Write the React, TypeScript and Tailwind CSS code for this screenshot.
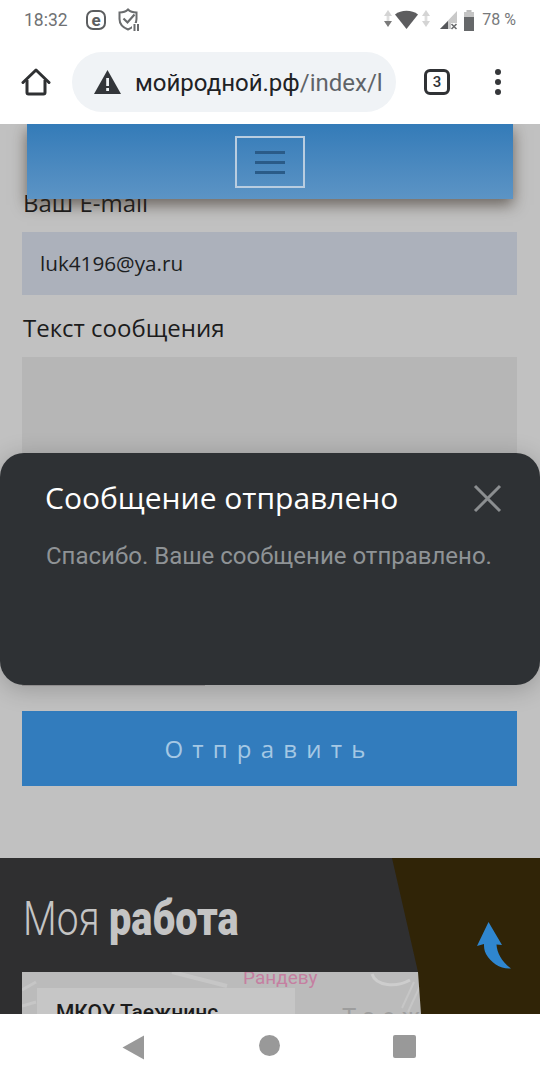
const roboto = "font-['Roboto',sans-serif]"
const openSans = "font-['Open_Sans',sans-serif]"

function StatusBar() {
  return (
    <div className={`relative flex h-10 items-center pl-6 pr-6 text-[16px] text-[#6f7173] ${roboto}`}>
      <span className="w-[62px] text-[17.5px]">18:32</span>
      {/* e badge */}
      <span className="flex h-[20px] w-[20px] items-center justify-center rounded-[7px] border-[2.5px] border-[#5c5e60] text-[17px] leading-none font-bold text-[#5c5e60]">e</span>
      {/* shield */}
      <svg className="ml-[12px]" width="22" height="24" viewBox="0 0 22 24" fill="none">
        <path d="M1.5 4.5C5 4.5 8 3.5 10 1.5 12 3.5 15 4.5 18.5 4.5V11C18.5 16 15 19.5 10 21.5 5 19.5 1.5 16 1.5 11Z" stroke="#6a6c6e" strokeWidth="2" />
        <path d="M5.5 10.5l4 4 7-8" stroke="#6a6c6e" strokeWidth="2.2" />
        <rect x="14" y="15" width="8" height="8" fill="white" />
        <rect x="15.5" y="16" width="2" height="7" fill="#6a6c6e" />
        <rect x="19" y="16" width="2" height="7" fill="#6a6c6e" />
      </svg>
      <div className="flex-1" />
      {/* wifi with activity arrows */}
      <svg width="47" height="22" viewBox="0 0 47 22">
        <path d="M4 1L8 7H0Z" fill="#d4d4d4" />
        <path d="M0 12h8L4 18Z" fill="#7a7a7a" />
        <rect x="2.6" y="7" width="2.8" height="5" fill="#dedede" />
        <path d="M11 5.5C17 .5 28 .5 34 5.5L22.5 20Z" fill="#5d5d5f" />
        <path d="M42 1L46 7H38Z" fill="#d4d4d4" />
        <path d="M38 12h8L42 18Z" fill="#d4d4d4" />
        <rect x="40.6" y="7" width="2.8" height="5" fill="#dedede" />
      </svg>
      {/* signal */}
      <svg className="ml-[9px]" width="19" height="20" viewBox="0 0 19 20">
        <path d="M0 19L17 1V13H11V19Z" fill="#c9c9c9" />
        <path d="M0 19L8 11V19Z" fill="#55575a" />
        <path d="M11.5 14l5 5M16.5 14l-5 5" stroke="#6a6c6e" strokeWidth="1.6" />
      </svg>
      {/* battery */}
      <svg className="ml-[4px]" width="12" height="21" viewBox="0 0 12 21">
        <rect x="3.5" y="0" width="5" height="3" fill="#bdbdbd" />
        <rect x="1" y="2" width="10" height="5" fill="#c4c4c4" />
        <rect x="1" y="7" width="10" height="14" fill="#66686a" />
      </svg>
      <span className="ml-[7px] text-[16px] text-[#77797b]">78 %</span>
    </div>
  )
}

function Toolbar() {
  return (
    <div className="flex h-[84px] items-start pt-3">
      <div className="flex h-[60px] w-[72px] items-center justify-center">
        <svg className="ml-[-1px]" width="30" height="28" viewBox="0 0 30 28" fill="none">
          <path d="M2 14.5L15 2l13 12.5" stroke="#2f3133" strokeWidth="3" strokeLinecap="round" strokeLinejoin="round" />
          <path d="M6 12v12.5a1.5 1.5 0 0 0 1.5 1.5h15a1.5 1.5 0 0 0 1.5-1.5V12" stroke="#2f3133" strokeWidth="3" />
        </svg>
      </div>
      <div className={`flex h-[60px] w-[324px] items-center overflow-hidden rounded-full bg-[#f0f3f6] pl-[22px] text-[24px] ${roboto}`}>
        <svg className="shrink-0" width="27" height="24" viewBox="0 0 27 24">
          <path d="M13.5 0L27 24H0Z" fill="#33363a" />
          <rect x="12.2" y="8" width="2.8" height="8" fill="#f0f3f6" />
          <rect x="12.2" y="18" width="2.8" height="3" fill="#f0f3f6" />
        </svg>
        <span className="ml-[14px] w-[247px] shrink-0 overflow-hidden pt-[2px] whitespace-nowrap text-[#202225]">
          мойродной.рф<span className="text-[#5f6368]">/index/l</span>
        </span>
      </div>
      <div className="ml-[28px] flex h-[60px] w-[26px] items-center justify-center">
        <span className={`flex h-[26px] w-[26px] items-center justify-center rounded-[6px] border-[3px] border-[#303235] text-[15px] font-medium text-[#303235] ${roboto}`}>3</span>
      </div>
      <div className="ml-[44px] flex h-[60px] w-[8px] flex-col items-center justify-center gap-[4px]">
        <span className="h-[6px] w-[6px] rounded-full bg-[#35373a]" />
        <span className="h-[6px] w-[6px] rounded-full bg-[#35373a]" />
        <span className="h-[6px] w-[6px] rounded-full bg-[#35373a]" />
      </div>
    </div>
  )
}

function FloatingNav() {
  return (
    <div className="absolute top-0 left-[27px] z-10 flex h-[75px] w-[486px] justify-center bg-gradient-to-b from-[#337bb8] to-[#5c94c5] pt-3 shadow-[0_6px_14px_rgba(50,40,30,0.6)]">
      <div className="flex h-[52px] w-[70px] flex-col items-center justify-center gap-[7px] border-2 border-[#b9cde0]">
        <span className="h-[3px] w-[30px] bg-[#2a5b88]" />
        <span className="h-[3px] w-[30px] bg-[#2a5b88]" />
        <span className="h-[3px] w-[30px] bg-[#2a5b88]" />
      </div>
    </div>
  )
}

function Modal() {
  return (
    <div className="absolute top-[329px] left-0 z-20 h-[232px] w-[540px] rounded-[24px] bg-[#2e3134] pt-[28px] pl-[45px] shadow-[0_4px_24px_rgba(0,0,0,0.22)]">
      <div className="flex items-center">
        <h2 className={`text-[30px] leading-[34px] text-white ${openSans}`}>Сообщение отправлено</h2>
        <svg className="ml-[75px]" width="29" height="29" viewBox="0 0 29 29">
          <path d="M2 2l25 25M27 2L2 27" stroke="#8b8e90" strokeWidth="3" />
        </svg>
      </div>
      <p className={`mt-[27px] ml-[1px] text-[24px] leading-[28px] whitespace-nowrap text-[#8f9396] ${roboto}`}>
        Спасибо. Ваше сообщение отправлено.
      </p>
    </div>
  )
}

function MapPreview() {
  return (
    <div className="relative mt-[28px] h-[60px] w-[495px] overflow-hidden bg-[#bbbbbb]">
      <svg className="absolute inset-0" width="495" height="60" viewBox="0 0 495 60" fill="none">
        <path d="M150 0l55 14" stroke="#c6c6c6" strokeWidth="4" />
        <path d="M0 18L14 10" stroke="#c6c6c6" strokeWidth="3" />
        <path d="M0 34L14 30" stroke="#c6c6c6" strokeWidth="3" />
        <path d="M350 2c4 12 24 14 38 6" stroke="#cdcdcd" strokeWidth="3" />
        <path d="M392 10l-12 26M398 14l-12 26" stroke="#c6c6c6" strokeWidth="2" />
      </svg>
      <span className={`absolute top-[-8px] left-[221px] text-[19px] text-[#c57fa1] ${roboto}`}>Рандеву</span>
      <span className={`absolute top-[27px] left-[320px] text-[24px] tracking-[7px] text-[#9d9d9d] ${roboto}`}>Таеж</span>
      <div className="absolute top-[16px] left-[15px] h-[44px] w-[258px] bg-[#c6c6c6] pt-[12px] pl-[19px]">
        <span className={`block text-[21px] leading-[24px] font-medium text-[#1b1b1b] ${roboto}`}>МКОУ Таежнинс</span>
      </div>
    </div>
  )
}

function WorkSection() {
  return (
    <section className="relative mt-[72px] h-[156px] overflow-hidden bg-[#2f2f30] pt-[36px] pl-[22px]">
      <h2 className={`pl-[1px] text-[48px] leading-[50px] whitespace-nowrap text-[#c4c4c4] ${roboto}`}>
        <span className="inline-block origin-left scale-x-[0.81] font-light">Моя</span>
        <span className="ml-[-9px] inline-block origin-left scale-x-[0.826] font-black">работа</span>
      </h2>
      <MapPreview />
      {/* brown wedge lying over the map */}
      <div className="absolute inset-0 bg-[#302407] [clip-path:polygon(392px_0,540px_0,540px_156px,421px_156px,418px_114px)]" />
      <svg className="absolute top-[63px] left-[476px]" width="37" height="50" viewBox="0 0 37 50">
        <path d="M12.5 1L26 24 20.5 23.5C21 32 26 41 35 47.5 25 48.5 15 42 10 33 8 29 8 26 8 23L1 25Z" fill="#2f86cf" />
      </svg>
    </section>
  )
}

export default function App() {
  return (
    <div className="flex h-[1080px] w-[540px] flex-col overflow-hidden bg-white">
      <header className="h-[124px] shrink-0 bg-white">
        <StatusBar />
        <Toolbar />
      </header>

      <main className={`relative h-[890px] shrink-0 overflow-hidden bg-[#c1c1c1] ${openSans}`}>
        <FloatingNav />
        <Modal />
        <div className="px-[22px] pt-[65px]">
          <label className="block pl-[1px] text-[24px] leading-[28px] text-[#1c1c1c]">Ваш E-mail</label>
          <div className="mt-[15px] flex h-[63px] w-[495px] items-center bg-[#acb1bb] pl-[18px] text-[20.7px] text-[#1c1e22]">
            luk4196@ya.ru
          </div>
          <label className="mt-[19px] block pl-[1px] text-[24px] leading-[28px] text-[#1c1c1c]">Текст сообщения</label>
          <div className="mt-[15px] h-[203px] w-[495px] bg-[#b6b6b6]" />
          {/* captcha mostly hidden by the dialog */}
          <div className="mt-[20px] h-[106px] w-[183px] bg-[#a5a2a3]" />
          <button className="mt-[25px] block h-[75px] w-[495px] bg-[#327cbd] text-[24px] leading-[70px] tracking-[9.2px] text-[#a5c8e4]">
            Отправить
          </button>
        </div>
        <WorkSection />
      </main>

      <nav className="flex h-[66px] shrink-0 items-start bg-white pt-[21px] pl-[122px]">
        <svg width="23" height="25" viewBox="0 0 23 25">
          <path d="M22 .5V24.5L.5 12.5Z" fill="#999999" />
        </svg>
        <span className="ml-[114px] h-[21px] w-[21px] rounded-full bg-[#999999]" />
        <span className="ml-[113px] h-[23px] w-[23px] rounded-[2px] bg-[#999999]" />
      </nav>
    </div>
  )
}
